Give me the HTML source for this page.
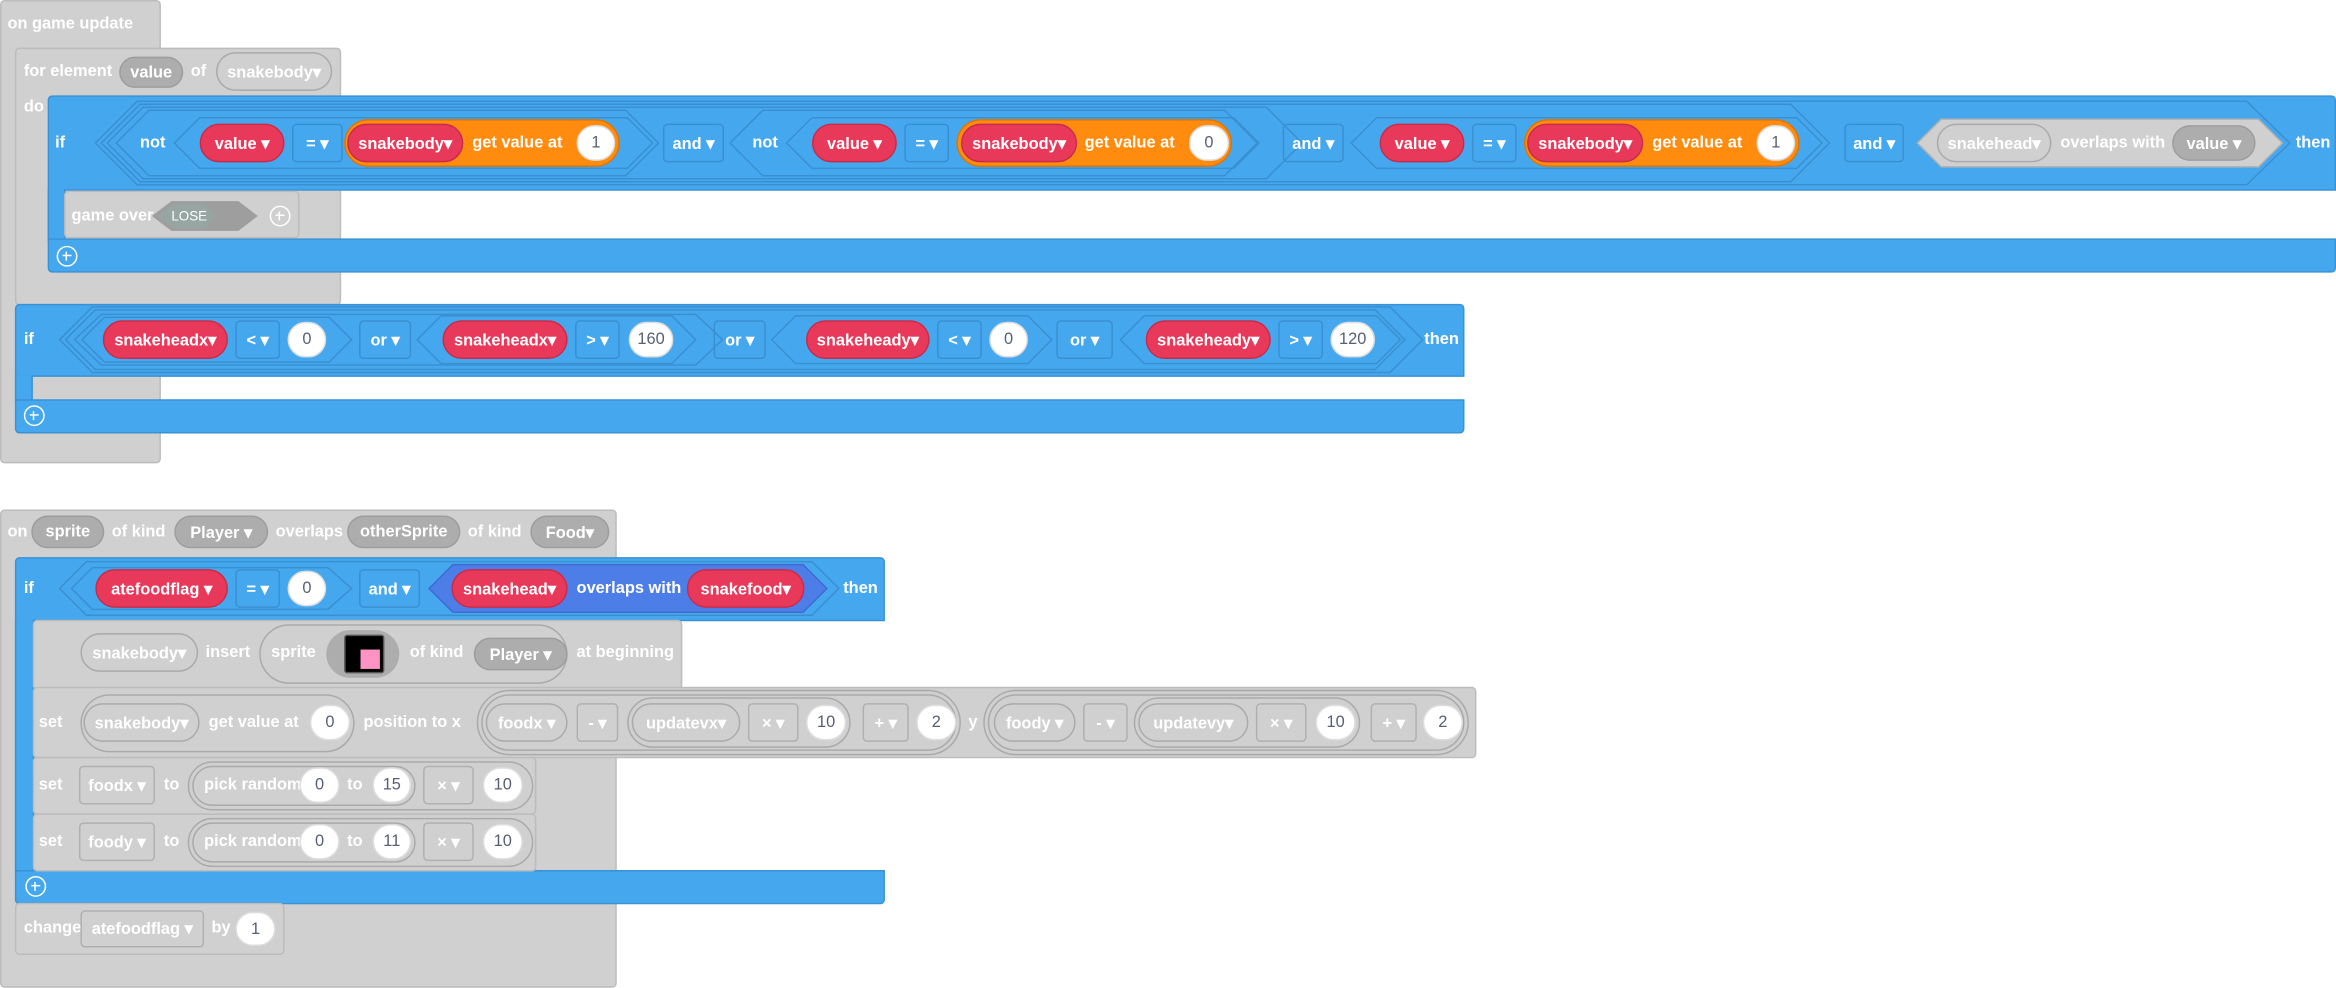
<!DOCTYPE html>
<html><head><meta charset="utf-8"><style>
html,body{margin:0;padding:0;background:#fff;width:2336px;height:988px;overflow:hidden}
#c{position:absolute;left:0;top:0;width:1568px;height:663px;transform:scale(1.4898);transform-origin:0 0}
.b{position:absolute;box-sizing:border-box}
.gr{background:#d0d0d0;border:1px solid #bcbcbc}
.bl{background:#45a8ef;border:1px solid #3a92d6}
.e{position:absolute;z-index:2;display:flex;align-items:center;justify-content:center;color:#fff;font:bold 11px "Liberation Sans",sans-serif;white-space:nowrap;box-sizing:border-box}
.l{position:absolute;z-index:2;color:#fff;font:bold 11px "Liberation Sans",sans-serif;white-space:nowrap;transform:translateY(-50%)}
.r{background:#e9395a;border:1px solid #c92c4a;border-radius:14px}
.dd{border:1px solid #3a8fd0;border-radius:3px}
.n{background:#fff;color:#575e75;border-radius:14px;font-weight:normal;border:1px solid #ddd}
.o{background:#ff8c0e;border:1px solid #e07400;border-radius:16px}
.g{background:#adadad;border:1px solid #9d9d9d;border-radius:14px}
.go{border:1px solid #aaa;border-radius:16px}
.gb{border:1px solid #b0b0b0;border-radius:3px}
.pl{position:absolute;z-index:2;width:14px;height:14px;border:1.5px solid #fff;border-radius:50%;box-sizing:border-box}
.pl:before{content:"";position:absolute;left:2.5px;top:4.7px;width:6px;height:1.6px;background:#fff}
.pl:after{content:"";position:absolute;left:4.7px;top:2.5px;width:1.6px;height:6px;background:#fff}
svg{position:absolute;left:0;top:0;z-index:1}
</style></head><body><div id="c">
<!-- event 1 -->
<div class="b gr" style="left:0;top:0;width:108px;height:311px;border-radius:3px"></div>
<div class="l" style="left:5px;top:16px">on game update</div>
<div class="b gr" style="left:10px;top:32px;width:219px;height:173px;border-radius:3px"></div>
<div class="l" style="left:16px;top:48px">for element</div>
<div class="e g" style="left:80px;top:38px;width:43px;height:21px">value</div>
<div class="l" style="left:128px;top:48px">of</div>
<div class="e go" style="left:145px;top:35px;width:78px;height:26px">snakebody▾</div>
<div class="l" style="left:16px;top:72px">do</div>
<!-- if 1 -->
<div class="b bl" style="left:32px;top:64px;width:1536px;height:64px;border-radius:3px 3px 0 0"></div>
<div class="b bl" style="left:32px;top:127px;width:12px;height:35px;border-top:none;border-bottom:none"></div>
<div class="b bl" style="left:32px;top:160px;width:1536px;height:23px;border-radius:0 0 3px 3px"></div>
<div class="pl" style="left:38px;top:165px"></div>
<div class="l" style="left:37px;top:96px">if</div>
<!-- game over -->
<div class="b gr" style="left:43px;top:128px;width:158px;height:32px;border-radius:3px"></div>
<div class="l" style="left:48px;top:145px">game over</div>
<div class="l" style="left:115px;top:145px;font-size:9px;font-weight:normal">LOSE</div>
<div class="pl" style="left:181px;top:138px"></div>
<!-- if 2 -->
<div class="b bl" style="left:10px;top:204px;width:973px;height:49px;border-radius:3px 3px 0 0"></div>
<div class="b bl" style="left:10px;top:252px;width:12px;height:18px;border-top:none;border-bottom:none"></div>
<div class="b bl" style="left:10px;top:268px;width:973px;height:23px;border-radius:0 0 3px 3px"></div>
<div class="pl" style="left:16px;top:272px"></div>
<div class="l" style="left:16px;top:228px">if</div>
<!-- event 2 -->
<div class="b gr" style="left:0;top:342px;width:414px;height:321px;border-radius:3px"></div>
<div class="b bl" style="left:10px;top:374px;width:584px;height:43px;border-radius:3px 3px 0 0"></div>
<div class="b bl" style="left:10px;top:416px;width:13px;height:170px;border-top:none;border-bottom:none"></div>
<div class="b bl" style="left:10px;top:584px;width:584px;height:23px;border-radius:0 0 3px 3px"></div>
<div class="pl" style="left:17px;top:588px"></div>

<svg width="1568" height="663">
<g fill="none" stroke="#3a8fd0" stroke-width="1">
<polygon points="64,96 92,68 1508,68 1537,96 1508,124 92,124"/>
<polygon points="68,96 94,70 1202,70 1228,96 1202,122 94,122"/>
<polygon points="72,96 96,72 850,72 874,96 850,120 96,120"/>
<polygon points="78,96 100,74 420,74 442,96 420,118 100,118"/>
<polygon points="117,96 134,79 421,79 438,96 421,113 134,113"/>
<polygon points="490,96 512,74 822,74 844,96 822,118 512,118"/>
<polygon points="528,96 545,79 828,79 845,96 828,113 545,113"/>
<polygon points="907,96 924,79 1206,79 1223,96 1206,113 924,113"/>
<polygon points="40,228 62,206 933,206 955,228 933,250 62,250"/>
<polygon points="44,228 64,208 923,208 943,228 923,248 64,248"/>
<polygon points="50,228 68,211 467,211 485,228 467,245 68,245"/>
<polygon points="55,228 70,213 221,213 236,228 221,243 70,243"/>
<polygon points="280,228 296,212 451,212 467,228 451,244 296,244"/>
<polygon points="518,228 534,212 690,212 706,228 690,244 534,244"/>
<polygon points="752,228 768,212 924,212 940,228 924,244 768,244"/>
<polygon points="40,395 58,377 545,377 563,395 545,413 58,413"/>
<polygon points="48,395 62,381 220,381 236,395 220,409 62,409"/>
</g>
<polygon points="1287,96 1303,80 1516,80 1532,96 1516,112 1303,112" fill="#d0d0d0" stroke="#b0b0b0"/>
<polygon points="288,395 304,379 539,379 555,395 539,411 304,411" fill="#4d7ee8" stroke="#3e6ad0"/>
<polygon points="102,145 115,135 160,135 173,145 160,155 115,155" fill="#9e9e9e"/>
<polygon points="105,145 117,137 137,137 146,145 137,153 117,153" fill="#97a5a3"/>
</svg>

<div class="l" style="left:94px;top:96px">not</div>
<div class="e r" style="left:134px;top:83px;width:57px;height:26px">value ▾</div>
<div class="e dd" style="left:196px;top:83px;width:34px;height:26px">= ▾</div>
<div class="e o" style="left:231px;top:80px;width:185px;height:32px"></div>
<div class="e r" style="left:233px;top:83px;width:78px;height:26px">snakebody▾</div>
<div class="l" style="left:317px;top:96px">get value at</div>
<div class="e n" style="left:387px;top:84px;width:26px;height:24px">1</div>
<div class="e dd" style="left:445px;top:83px;width:41px;height:26px">and ▾</div>
<div class="l" style="left:505px;top:96px">not</div>
<div class="e r" style="left:545px;top:83px;width:57px;height:26px">value ▾</div>
<div class="e dd" style="left:607px;top:83px;width:30px;height:26px">= ▾</div>
<div class="e o" style="left:642px;top:80px;width:185px;height:32px"></div>
<div class="e r" style="left:645px;top:83px;width:78px;height:26px">snakebody▾</div>
<div class="l" style="left:728px;top:96px">get value at</div>
<div class="e n" style="left:798px;top:84px;width:27px;height:24px">0</div>
<div class="e dd" style="left:861px;top:83px;width:41px;height:26px">and ▾</div>
<div class="e r" style="left:926px;top:83px;width:57px;height:26px">value ▾</div>
<div class="e dd" style="left:988px;top:83px;width:30px;height:26px">= ▾</div>
<div class="e o" style="left:1023px;top:80px;width:185px;height:32px"></div>
<div class="e r" style="left:1025px;top:83px;width:78px;height:26px">snakebody▾</div>
<div class="l" style="left:1109px;top:96px">get value at</div>
<div class="e n" style="left:1179px;top:84px;width:26px;height:24px">1</div>
<div class="e dd" style="left:1238px;top:83px;width:40px;height:26px">and ▾</div>
<div class="e go" style="left:1300px;top:83px;width:77px;height:26px">snakehead▾</div>
<div class="l" style="left:1383px;top:96px">overlaps with</div>
<div class="e g" style="left:1458px;top:84px;width:56px;height:24px">value ▾</div>
<div class="l" style="left:1541px;top:96px">then</div>

<div class="e r" style="left:69px;top:215px;width:84px;height:26px">snakeheadx▾</div>
<div class="e dd" style="left:158px;top:215px;width:30px;height:26px">&lt; ▾</div>
<div class="e n" style="left:193px;top:216px;width:26px;height:24px">0</div>
<div class="e dd" style="left:241px;top:215px;width:35px;height:26px">or ▾</div>
<div class="e r" style="left:297px;top:215px;width:84px;height:26px">snakeheadx▾</div>
<div class="e dd" style="left:386px;top:215px;width:30px;height:26px">&gt; ▾</div>
<div class="e n" style="left:422px;top:216px;width:30px;height:24px">160</div>
<div class="e dd" style="left:479px;top:215px;width:35px;height:26px">or ▾</div>
<div class="e r" style="left:541px;top:215px;width:83px;height:26px">snakeheady▾</div>
<div class="e dd" style="left:629px;top:215px;width:30px;height:26px">&lt; ▾</div>
<div class="e n" style="left:664px;top:216px;width:26px;height:24px">0</div>
<div class="e dd" style="left:709px;top:215px;width:38px;height:26px">or ▾</div>
<div class="e r" style="left:769px;top:215px;width:84px;height:26px">snakeheady▾</div>
<div class="e dd" style="left:858px;top:215px;width:30px;height:26px">&gt; ▾</div>
<div class="e n" style="left:893px;top:216px;width:30px;height:24px">120</div>
<div class="l" style="left:956px;top:228px">then</div>

<div class="l" style="left:5px;top:357px">on</div>
<div class="e g" style="left:21px;top:346px;width:49px;height:22px">sprite</div>
<div class="l" style="left:75px;top:357px">of kind</div>
<div class="e g" style="left:117px;top:346px;width:63px;height:22px">Player ▾</div>
<div class="l" style="left:185px;top:357px">overlaps</div>
<div class="e g" style="left:233px;top:346px;width:76px;height:22px">otherSprite</div>
<div class="l" style="left:314px;top:357px">of kind</div>
<div class="e g" style="left:356px;top:346px;width:53px;height:22px">Food▾</div>
<div class="l" style="left:16px;top:395px">if</div>
<div class="e r" style="left:64px;top:382px;width:89px;height:26px">atefoodflag ▾</div>
<div class="e dd" style="left:158px;top:382px;width:30px;height:26px">= ▾</div>
<div class="e n" style="left:193px;top:383px;width:26px;height:24px">0</div>
<div class="e dd" style="left:241px;top:382px;width:41px;height:26px">and ▾</div>
<div class="e r" style="left:303px;top:382px;width:78px;height:26px">snakehead▾</div>
<div class="l" style="left:387px;top:395px">overlaps with</div>
<div class="e r" style="left:461px;top:382px;width:79px;height:26px">snakefood▾</div>
<div class="l" style="left:566px;top:395px">then</div>
<!-- insert -->
<div class="b gr" style="left:22px;top:416px;width:436px;height:47px;border-radius:3px"></div>
<div class="e go" style="left:54px;top:425px;width:79px;height:26px">snakebody▾</div>
<div class="l" style="left:138px;top:438px">insert</div>
<div class="e go" style="left:174px;top:419px;width:207px;height:40px;border-radius:20px"></div>
<div class="l" style="left:182px;top:438px">sprite</div>
<div class="b" style="left:219px;top:423px;width:49px;height:32px;border-radius:16px;background:#adadad;z-index:2"></div>
<div class="b" style="left:231px;top:426px;width:27px;height:26px;background:#000;border:1px solid #555;border-radius:2px;z-index:2"></div>
<div class="b" style="left:242px;top:436px;width:13px;height:13px;background:#ff93c4;z-index:2"></div>
<div class="l" style="left:275px;top:438px">of kind</div>
<div class="e g" style="left:318px;top:428px;width:63px;height:22px">Player ▾</div>
<div class="l" style="left:387px;top:438px">at beginning</div>
<!-- set position -->
<div class="b gr" style="left:22px;top:461px;width:969px;height:48px;border-radius:3px"></div>
<div class="l" style="left:26px;top:485px">set</div>
<div class="e go" style="left:54px;top:466px;width:184px;height:39px;border-radius:20px"></div>
<div class="e go" style="left:56px;top:472px;width:78px;height:26px">snakebody▾</div>
<div class="l" style="left:140px;top:485px">get value at</div>
<div class="e n" style="left:208px;top:473px;width:27px;height:24px">0</div>
<div class="l" style="left:244px;top:485px">position to x</div>
<div class="e go" style="left:320px;top:463px;width:325px;height:44px;border-radius:22px"></div>
<div class="e go" style="left:323px;top:466px;width:319px;height:38px;border-radius:20px"></div>
<div class="e go" style="left:326px;top:472px;width:55px;height:26px">foodx ▾</div>
<div class="e gb" style="left:387px;top:472px;width:28px;height:26px">- ▾</div>
<div class="e go" style="left:421px;top:468px;width:150px;height:34px;border-radius:18px"></div>
<div class="e go" style="left:424px;top:472px;width:73px;height:26px">updatevx▾</div>
<div class="e gb" style="left:502px;top:472px;width:34px;height:26px">× ▾</div>
<div class="e n" style="left:541px;top:473px;width:27px;height:24px">10</div>
<div class="e gb" style="left:579px;top:472px;width:31px;height:26px">+ ▾</div>
<div class="e n" style="left:615px;top:473px;width:27px;height:24px">2</div>
<div class="l" style="left:650px;top:485px">y</div>
<div class="e go" style="left:660px;top:463px;width:326px;height:44px;border-radius:22px"></div>
<div class="e go" style="left:663px;top:466px;width:320px;height:38px;border-radius:20px"></div>
<div class="e go" style="left:667px;top:472px;width:55px;height:26px">foody ▾</div>
<div class="e gb" style="left:727px;top:472px;width:30px;height:26px">- ▾</div>
<div class="e go" style="left:761px;top:468px;width:152px;height:34px;border-radius:18px"></div>
<div class="e go" style="left:764px;top:472px;width:74px;height:26px">updatevy▾</div>
<div class="e gb" style="left:843px;top:472px;width:34px;height:26px">× ▾</div>
<div class="e n" style="left:883px;top:473px;width:27px;height:24px">10</div>
<div class="e gb" style="left:920px;top:472px;width:31px;height:26px">+ ▾</div>
<div class="e n" style="left:955px;top:473px;width:27px;height:24px">2</div>
<!-- set foodx -->
<div class="b gr" style="left:22px;top:508px;width:338px;height:39px;border-radius:3px"></div>
<div class="l" style="left:26px;top:527px">set</div>
<div class="e gb" style="left:53px;top:514px;width:51px;height:26px">foodx ▾</div>
<div class="l" style="left:110px;top:527px">to</div>
<div class="e go" style="left:126px;top:511px;width:232px;height:33px;border-radius:17px"></div>
<div class="e go" style="left:129px;top:514px;width:150px;height:27px;border-radius:14px"></div>
<div class="l" style="left:137px;top:527px">pick random</div>
<div class="e n" style="left:201px;top:515px;width:27px;height:24px">0</div>
<div class="l" style="left:233px;top:527px">to</div>
<div class="e n" style="left:250px;top:515px;width:26px;height:24px">15</div>
<div class="e gb" style="left:284px;top:514px;width:34px;height:26px">× ▾</div>
<div class="e n" style="left:324px;top:515px;width:27px;height:24px">10</div>
<!-- set foody -->
<div class="b gr" style="left:22px;top:546px;width:338px;height:39px;border-radius:3px"></div>
<div class="l" style="left:26px;top:565px">set</div>
<div class="e gb" style="left:53px;top:552px;width:51px;height:26px">foody ▾</div>
<div class="l" style="left:110px;top:565px">to</div>
<div class="e go" style="left:126px;top:549px;width:232px;height:33px;border-radius:17px"></div>
<div class="e go" style="left:129px;top:552px;width:150px;height:27px;border-radius:14px"></div>
<div class="l" style="left:137px;top:565px">pick random</div>
<div class="e n" style="left:201px;top:553px;width:27px;height:24px">0</div>
<div class="l" style="left:233px;top:565px">to</div>
<div class="e n" style="left:250px;top:553px;width:26px;height:24px">11</div>
<div class="e gb" style="left:284px;top:552px;width:34px;height:26px">× ▾</div>
<div class="e n" style="left:324px;top:553px;width:27px;height:24px">10</div>
<!-- change -->
<div class="b gr" style="left:10px;top:606px;width:181px;height:35px;border-radius:3px"></div>
<div class="l" style="left:16px;top:623px">change</div>
<div class="e gb" style="left:54px;top:611px;width:83px;height:25px">atefoodflag ▾</div>
<div class="l" style="left:142px;top:623px">by</div>
<div class="e n" style="left:158px;top:612px;width:27px;height:23px">1</div>
</div></body></html>
